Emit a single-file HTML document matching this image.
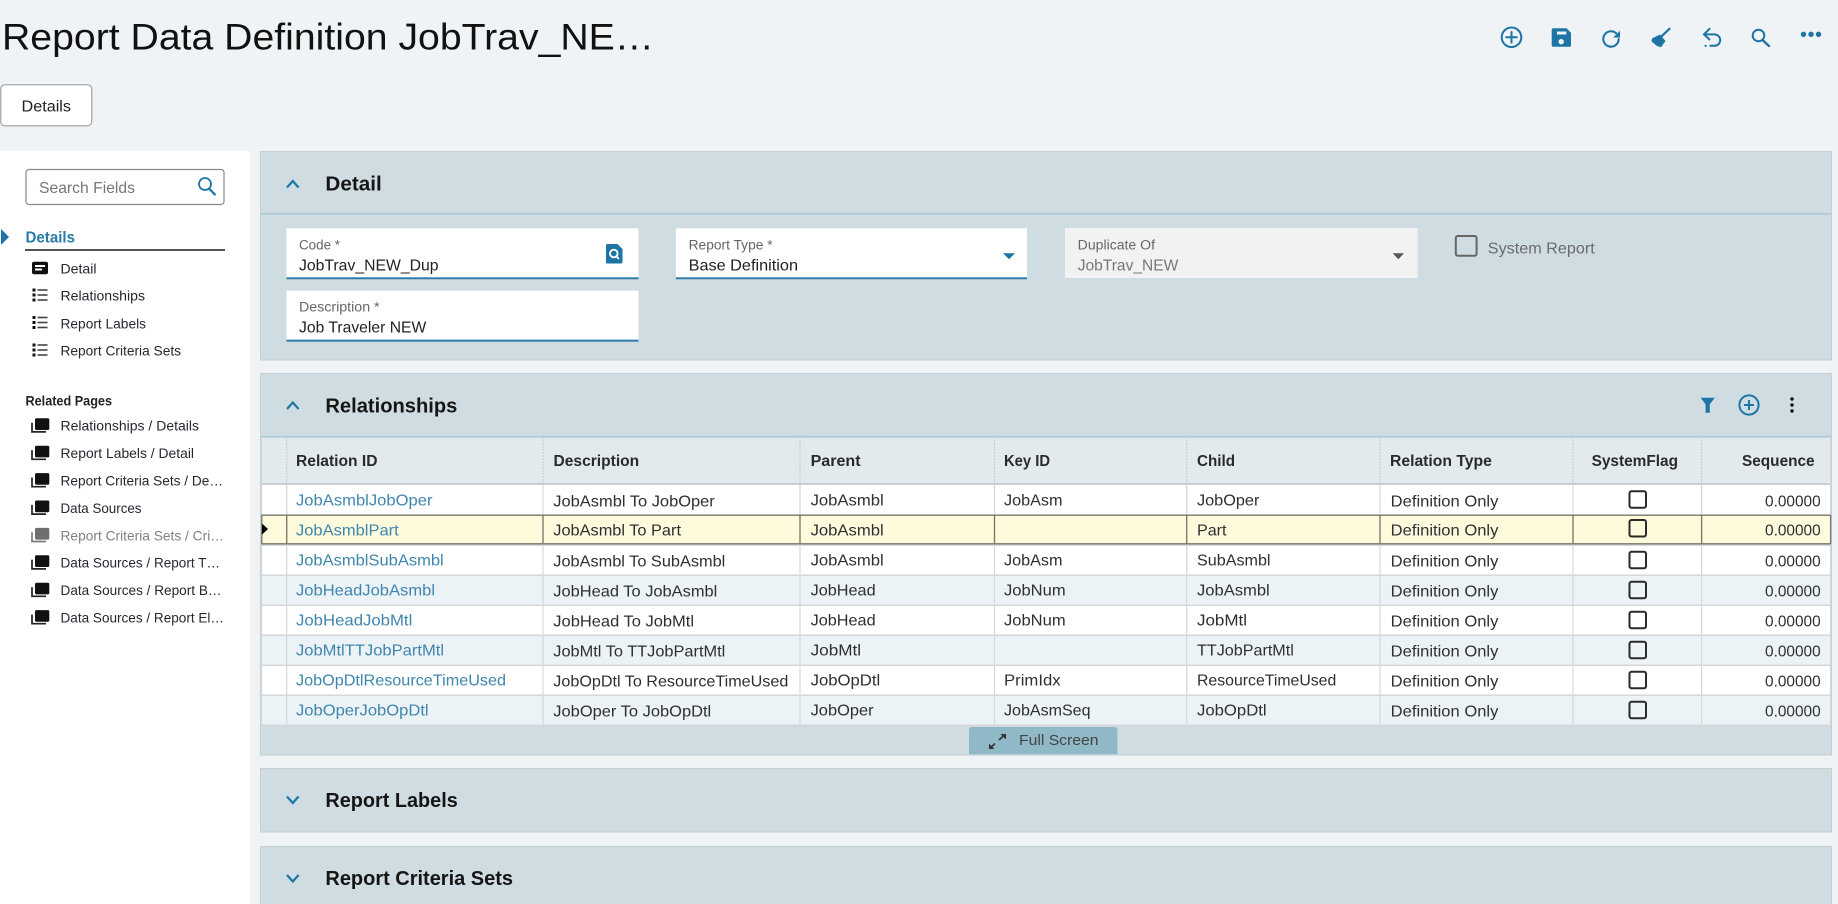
<!DOCTYPE html>
<html lang="en"><head><meta charset="utf-8"><title>Report Data Definition</title>
<style>
html,body{margin:0;padding:0;background:#eff3f6;width:1838px;height:904px;overflow:hidden}
svg{display:block;font-family:"Liberation Sans",sans-serif;filter:blur(.3px)}
.n{font-size:14px;fill:#2a2530}
.h{font-size:16px;font-weight:700;fill:#2a2a2a}
.c{font-size:16px;fill:#2f2f33}
.l{font-size:16px;fill:#3f86ad}
.p{font-size:20.5px;font-weight:700;fill:#151515}
.lab{font-size:13.4px;fill:#666}
.v{font-size:16px;fill:#222}
</style></head><body>
<svg width="1838" height="904" viewBox="0 0 1838 904" xmlns="http://www.w3.org/2000/svg">
<defs>
<symbol id="st" overflow="visible" viewBox="0 0 1 1" width="1" height="1">
<rect x="35" y="-12.4" width="14.3" height="11.7" rx="1.5" fill="#111"/>
<path d="M32 -8V1.2H46" fill="none" stroke="#222" stroke-width="1.7"/>
</symbol>
<symbol id="ls" overflow="visible" viewBox="0 0 1 1" width="1" height="1">
<g fill="#111"><rect x="32.5" y="-11.5" width="3" height="3"/><rect x="32.5" y="-6.5" width="3" height="3"/><rect x="32.5" y="-1.5" width="3" height="3"/></g>
<g fill="#444"><rect x="37.5" y="-10.8" width="10" height="1.6"/><rect x="37.5" y="-5.8" width="10" height="1.6"/><rect x="37.5" y="-0.8" width="10" height="1.6"/></g>
</symbol>
<symbol id="cb" overflow="visible" viewBox="0 0 1 1" width="1" height="1">
<rect x="1629.5" y="6.7" width="16.5" height="16.5" rx="2" fill="none" stroke="#2a2a2a" stroke-width="2"/>
</symbol>
</defs>

<rect width="1838" height="904" fill="#eff3f6"/>

<!-- page title -->
<text x="2" y="49.5" font-size="37" fill="#111" textLength="652" lengthAdjust="spacingAndGlyphs">Report Data Definition JobTrav_NE…</text>

<!-- toolbar -->
<g fill="none" stroke="#1d75a5" stroke-width="2" stroke-linecap="round">
<circle cx="1511.5" cy="37.3" r="9.8"/><path d="M1511.5 32v10.6M1506.2 37.3h10.6"/>
<path d="M1618.7 39a7.7 7.7 0 1 1-2.6-5.8" stroke-width="2.1"/>
<path d="M1709.5 28.8L1704 34.3l5.5 5.2M1705 34.400h9.500a5.700 5.700 0 0 1 0 11.400h-4.200"/>
<circle cx="1758.500" cy="35.500" r="5.800"/><path d="M1763 40.500l6 5.500" stroke-width="2.400"/>
<path d="M1669.500 28.800l-8 7.500" stroke-width="2.200"/>
</g>
<g fill="#1d75a5">
<path d="M1553.200 28.300h13.300l4.500 4.500v12.400a1.500 1.500 0 0 1-1.500 1.500h-16.300a1.500 1.500 0 0 1-1.500-1.500v-15.400a1.500 1.500 0 0 1 1.500-1.500z"/>
<path d="M1620 30.700v6.800h-6.800z"/>
<circle cx="1705.600" cy="45.900" r="1.100"/>
<path d="M1652 38.500l8-4 5.500 6.500-4.500 6.300-4-1.300-5.500-4.500z"/>
<circle cx="1803.500" cy="34.300" r="2.700"/><circle cx="1811" cy="34.300" r="2.700"/><circle cx="1818.500" cy="34.300" r="2.700"/>
</g>
<rect x="1557" y="31.500" width="9.300" height="3" fill="#eff3f6"/>
<circle cx="1561.200" cy="41.700" r="2.700" fill="#eff3f6"/>

<!-- tab -->
<rect x="0.750" y="84.750" width="91" height="41" rx="4" fill="#fff" stroke="#a8a8a8" stroke-width="1.300"/>
<text x="21.500" y="111.500" font-size="15.500" fill="#222" textLength="49.500" lengthAdjust="spacingAndGlyphs">Details</text>

<!-- left nav -->
<rect x="0" y="151" width="250" height="753" fill="#fff"/>
<rect x="26" y="169.500" width="198" height="35" rx="3" fill="#fff" stroke="#888" stroke-width="1.200"/>
<text x="39" y="193" font-size="16" fill="#777" textLength="96" lengthAdjust="spacingAndGlyphs">Search Fields</text>
<g fill="none" stroke="#1d75a5" stroke-width="1.800"><circle cx="205" cy="184" r="6"/><path d="M209.300 188.800l6.200 6.300" stroke-width="2.200"/></g>

<path d="M1 229l8 8-8 8z" fill="#1d75a5"/>
<text x="25.500" y="242.300" font-size="16" font-weight="700" fill="#2a7ba6" textLength="49.500" lengthAdjust="spacingAndGlyphs">Details</text>
<rect x="25" y="249" width="200" height="2" fill="#555"/>

<rect x="32" y="261.700" width="16" height="12.600" rx="2" fill="#111"/>
<rect x="35" y="265" width="10" height="2" fill="#fff"/><rect x="35" y="268.500" width="7" height="2" fill="#fff"/>
<text class="n" x="60.500" y="273.300" textLength="36" lengthAdjust="spacingAndGlyphs">Detail</text>
<use href="#ls" y="300"/><text class="n" x="60.500" y="300.700" textLength="84.500" lengthAdjust="spacingAndGlyphs">Relationships</text>
<use href="#ls" y="327.500"/><text class="n" x="60.500" y="328.300" textLength="85.500" lengthAdjust="spacingAndGlyphs">Report Labels</text>
<use href="#ls" y="355"/><text class="n" x="60.500" y="355.700" textLength="120.500" lengthAdjust="spacingAndGlyphs">Report Criteria Sets</text>

<text x="25.500" y="405.700" font-size="14" font-weight="700" fill="#222" textLength="86.500" lengthAdjust="spacingAndGlyphs">Related Pages</text>

<use href="#st" y="430.700"/><text class="n" x="60.500" y="430.700" textLength="138.500" lengthAdjust="spacingAndGlyphs">Relationships / Details</text>
<use href="#st" y="458.100"/><text class="n" x="60.500" y="458.100" textLength="133.500" lengthAdjust="spacingAndGlyphs">Report Labels / Detail</text>
<use href="#st" y="485.500"/><text class="n" x="60.500" y="485.500" textLength="162.500" lengthAdjust="spacingAndGlyphs">Report Criteria Sets / De…</text>
<use href="#st" y="512.900"/><text class="n" x="60.500" y="512.900" textLength="81" lengthAdjust="spacingAndGlyphs">Data Sources</text>
<g opacity=".6"><use href="#st" y="540.300"/></g><text x="60.500" y="540.300" font-size="14" fill="#808080" textLength="163.500" lengthAdjust="spacingAndGlyphs">Report Criteria Sets / Cri…</text>
<use href="#st" y="567.700"/><text class="n" x="60.500" y="567.700" textLength="159.500" lengthAdjust="spacingAndGlyphs">Data Sources / Report T…</text>
<use href="#st" y="595.100"/><text class="n" x="60.500" y="595.100" textLength="161" lengthAdjust="spacingAndGlyphs">Data Sources / Report B…</text>
<use href="#st" y="622.500"/><text class="n" x="60.500" y="622.500" textLength="163.500" lengthAdjust="spacingAndGlyphs">Data Sources / Report El…</text>

<!-- Detail panel -->
<rect x="260.500" y="151.500" width="1571" height="208.500" fill="#cfdce1" stroke="#c6ced2"/>
<rect x="261" y="213" width="1570" height="1.500" fill="#a9c8d3"/>
<path d="M287 187.500l5.800-6.500 5.800 6.500" fill="none" stroke="#1d75a5" stroke-width="2.200"/>
<text class="p" x="325.400" y="190.700" textLength="56.300" lengthAdjust="spacingAndGlyphs">Detail</text>

<rect x="286.500" y="228.300" width="352" height="51" fill="#fff"/><rect x="286.500" y="277.300" width="352" height="2" fill="#2a7ba6"/>
<text class="lab" x="299" y="249.300" textLength="41" lengthAdjust="spacingAndGlyphs">Code *</text>
<text class="v" x="299" y="270.700" textLength="139.500" lengthAdjust="spacingAndGlyphs">JobTrav_NEW_Dup</text>
<path d="M606 245.500a1.500 1.500 0 0 1 1.500-1.500h10l5 5v13a1.500 1.500 0 0 1-1.500 1.500h-13.500a1.500 1.500 0 0 1-1.500-1.500z" fill="#1d75a5"/>
<circle cx="613.800" cy="253.500" r="3.800" fill="none" stroke="#fff" stroke-width="1.800"/><path d="M616.500 256.500l2.500 2.500" stroke="#fff" stroke-width="1.800"/>

<rect x="675.800" y="228.300" width="351.200" height="51" fill="#fff"/><rect x="675.800" y="277.300" width="351.200" height="2" fill="#2a7ba6"/>
<text class="lab" x="688.600" y="249.300" textLength="84" lengthAdjust="spacingAndGlyphs">Report Type *</text>
<text class="v" x="688.600" y="270.700" textLength="109.400" lengthAdjust="spacingAndGlyphs">Base Definition</text>
<path d="M1003 253.300h12l-6 6z" fill="#1d75a5"/>

<rect x="1065" y="228" width="352.600" height="50" fill="#f2f2f2"/>
<text class="lab" x="1077.700" y="249.300" textLength="77.300" lengthAdjust="spacingAndGlyphs">Duplicate Of</text>
<text x="1077.700" y="270.700" font-size="16" fill="#777" textLength="100.700" lengthAdjust="spacingAndGlyphs">JobTrav_NEW</text>
<path d="M1392.700 253.300h11.300l-5.650 6z" fill="#555"/>
<rect x="1455.800" y="236" width="20.800" height="19.700" rx="2" fill="none" stroke="#666" stroke-width="2"/>
<text x="1487.800" y="253.300" font-size="16" fill="#6b6b6b" textLength="106.900" lengthAdjust="spacingAndGlyphs">System Report</text>

<rect x="286.500" y="290.700" width="352" height="51" fill="#fff"/><rect x="286.500" y="339.700" width="352" height="2" fill="#2a7ba6"/>
<text class="lab" x="299" y="311.700" textLength="80.600" lengthAdjust="spacingAndGlyphs">Description *</text>
<text class="v" x="299" y="332.700" textLength="127.300" lengthAdjust="spacingAndGlyphs">Job Traveler NEW</text>

<!-- Relationships panel -->
<rect x="260.500" y="373.500" width="1571" height="381.500" fill="#cfdce1" stroke="#c6ced2"/>
<rect x="261" y="436" width="1570" height="1.500" fill="#a9c8d3"/>
<path d="M287 409l5.800-6.500 5.800 6.500" fill="none" stroke="#1d75a5" stroke-width="2.200"/>
<text class="p" x="325.400" y="412.700" textLength="132" lengthAdjust="spacingAndGlyphs">Relationships</text>
<path d="M1700.600 397.700h14.200l-5 6.500v8.500h-4.200v-8.500z" fill="#1d75a5"/>
<g fill="none" stroke="#1d75a5" stroke-width="2"><circle cx="1749" cy="405" r="9.600"/><path d="M1749 400v10M1744 405h10"/></g>
<g fill="#111"><circle cx="1792" cy="399" r="1.700"/><circle cx="1792" cy="405" r="1.700"/><circle cx="1792" cy="411" r="1.700"/></g>

<!-- table -->
<rect x="261.500" y="437.500" width="1568.500" height="46" fill="#e3eaed"/>
<rect x="261.500" y="483" width="1568.500" height="2.500" fill="#c8cfd2"/>
<rect x="261.500" y="485" width="1568.500" height="30" fill="#fff"/>
<rect x="261.500" y="515" width="1568.500" height="29" fill="#fefadc"/>
<rect x="261.500" y="544" width="1568.500" height="31" fill="#fff"/>
<rect x="261.500" y="575" width="1568.500" height="30" fill="#ecf3f6"/>
<rect x="261.500" y="605" width="1568.500" height="30" fill="#fff"/>
<rect x="261.500" y="635" width="1568.500" height="30" fill="#ecf3f6"/>
<rect x="261.500" y="665" width="1568.500" height="30" fill="#fff"/>
<rect x="261.500" y="695" width="1568.500" height="30" fill="#ecf3f6"/>
<g fill="#d5d8da">
<rect x="261.500" y="544.500" width="1568.500" height="1.500"/>
<rect x="261.500" y="574.500" width="1568.500" height="1.500"/>
<rect x="261.500" y="604.500" width="1568.500" height="1.500"/>
<rect x="261.500" y="634.500" width="1568.500" height="1.500"/>
<rect x="261.500" y="664.500" width="1568.500" height="1.500"/>
<rect x="261.500" y="694.500" width="1568.500" height="1.500"/>
<rect x="261.500" y="724.500" width="1568.500" height="2"/>
</g>
<g stroke="#d5d8da" stroke-width="1.200">
<path d="M286.700 485V725M543 485V725M800 485V725M994.500 485V725M1186.700 485V725M1380 485V725M1573 485V725M1701.600 485V725M1830.600 437V726M261.500 437V726"/>
</g>
<g stroke="#c8cfd2" stroke-width="1.200" stroke-dasharray="2 1">
<path d="M286.700 437V483M543 437V483M800 437V483M994.500 437V483M1186.700 437V483M1380 437V483M1573 437V483M1701.600 437V483"/>
</g>
<g stroke="#77776c" stroke-width="1.300">
<path d="M261.500 515.200H1830.600M261.500 543.800H1830.600M286.700 515V544M543 515V544M800 515V544M994.500 515V544M1186.700 515V544M1380 515V544M1573 515V544M1701.600 515V544M261.800 515V544M1830.600 515V544"/>
</g>
<path d="M262 523.500l6 5.500-6 5.500z" fill="#000"/>

<text class="h" x="296" y="466" textLength="81.500" lengthAdjust="spacingAndGlyphs">Relation ID</text>
<text class="h" x="553.500" y="466" textLength="85.700" lengthAdjust="spacingAndGlyphs">Description</text>
<text class="h" x="810.600" y="466" textLength="50" lengthAdjust="spacingAndGlyphs">Parent</text>
<text class="h" x="1004" y="466" textLength="46" lengthAdjust="spacingAndGlyphs">Key ID</text>
<text class="h" x="1197" y="466" textLength="38" lengthAdjust="spacingAndGlyphs">Child</text>
<text class="h" x="1390" y="466" textLength="101.800" lengthAdjust="spacingAndGlyphs">Relation Type</text>
<text class="h" x="1591.600" y="466" textLength="86.400" lengthAdjust="spacingAndGlyphs">SystemFlag</text>
<text class="h" x="1742" y="466" textLength="72.600" lengthAdjust="spacingAndGlyphs">Sequence</text>

<text class="l" x="296" y="505.700" textLength="136.500" lengthAdjust="spacingAndGlyphs">JobAsmblJobOper</text><text class="c" x="553.300" y="506.700" textLength="161.500" lengthAdjust="spacingAndGlyphs">JobAsmbl To JobOper</text><text class="c" x="810.600" y="505.700" textLength="73.100" lengthAdjust="spacingAndGlyphs">JobAsmbl</text><text class="c" x="1004" y="505.700" textLength="58.500" lengthAdjust="spacingAndGlyphs">JobAsm</text><text class="c" x="1197" y="505.700" textLength="62.400" lengthAdjust="spacingAndGlyphs">JobOper</text><text class="c" x="1390.700" y="506.700" textLength="107.700" lengthAdjust="spacingAndGlyphs">Definition Only</text><use href="#cb" y="484.500"/><text class="c" x="1765" y="506.700" textLength="55.700" lengthAdjust="spacingAndGlyphs">0.00000</text>

<text class="l" x="296" y="535.700" textLength="102.700" lengthAdjust="spacingAndGlyphs">JobAsmblPart</text><text class="c" x="553.300" y="535.700" textLength="127.700" lengthAdjust="spacingAndGlyphs">JobAsmbl To Part</text><text class="c" x="810.600" y="535.700" textLength="73.100" lengthAdjust="spacingAndGlyphs">JobAsmbl</text><text class="c" x="1197" y="535.700" textLength="29.500" lengthAdjust="spacingAndGlyphs">Part</text><text class="c" x="1390.700" y="535.700" textLength="107.700" lengthAdjust="spacingAndGlyphs">Definition Only</text><use href="#cb" y="513.300"/><text class="c" x="1765" y="535.700" textLength="55.700" lengthAdjust="spacingAndGlyphs">0.00000</text>

<text class="l" x="296" y="565.700" textLength="147.700" lengthAdjust="spacingAndGlyphs">JobAsmblSubAsmbl</text><text class="c" x="553.300" y="566.700" textLength="172" lengthAdjust="spacingAndGlyphs">JobAsmbl To SubAsmbl</text><text class="c" x="810.600" y="565.700" textLength="73.100" lengthAdjust="spacingAndGlyphs">JobAsmbl</text><text class="c" x="1004" y="565.700" textLength="58.500" lengthAdjust="spacingAndGlyphs">JobAsm</text><text class="c" x="1197" y="565.700" textLength="73.500" lengthAdjust="spacingAndGlyphs">SubAsmbl</text><text class="c" x="1390.700" y="566.700" textLength="107.700" lengthAdjust="spacingAndGlyphs">Definition Only</text><use href="#cb" y="545"/><text class="c" x="1765" y="566.700" textLength="55.700" lengthAdjust="spacingAndGlyphs">0.00000</text>

<text class="l" x="296" y="595.700" textLength="139" lengthAdjust="spacingAndGlyphs">JobHeadJobAsmbl</text><text class="c" x="553.300" y="596.700" textLength="164" lengthAdjust="spacingAndGlyphs">JobHead To JobAsmbl</text><text class="c" x="810.600" y="595.700" textLength="65" lengthAdjust="spacingAndGlyphs">JobHead</text><text class="c" x="1004" y="595.700" textLength="61.600" lengthAdjust="spacingAndGlyphs">JobNum</text><text class="c" x="1197" y="595.700" textLength="72.700" lengthAdjust="spacingAndGlyphs">JobAsmbl</text><text class="c" x="1390.700" y="596.700" textLength="107.700" lengthAdjust="spacingAndGlyphs">Definition Only</text><use href="#cb" y="575"/><text class="c" x="1765" y="596.700" textLength="55.700" lengthAdjust="spacingAndGlyphs">0.00000</text>

<text class="l" x="296" y="625.700" textLength="116.300" lengthAdjust="spacingAndGlyphs">JobHeadJobMtl</text><text class="c" x="553.300" y="626.700" textLength="140.700" lengthAdjust="spacingAndGlyphs">JobHead To JobMtl</text><text class="c" x="810.600" y="625.700" textLength="65" lengthAdjust="spacingAndGlyphs">JobHead</text><text class="c" x="1004" y="625.700" textLength="61.600" lengthAdjust="spacingAndGlyphs">JobNum</text><text class="c" x="1197" y="625.700" textLength="50" lengthAdjust="spacingAndGlyphs">JobMtl</text><text class="c" x="1390.700" y="626.700" textLength="107.700" lengthAdjust="spacingAndGlyphs">Definition Only</text><use href="#cb" y="605"/><text class="c" x="1765" y="626.700" textLength="55.700" lengthAdjust="spacingAndGlyphs">0.00000</text>

<text class="l" x="296" y="655.700" textLength="148" lengthAdjust="spacingAndGlyphs">JobMtlTTJobPartMtl</text><text class="c" x="553.300" y="656.700" textLength="172" lengthAdjust="spacingAndGlyphs">JobMtl To TTJobPartMtl</text><text class="c" x="810.600" y="655.700" textLength="50.500" lengthAdjust="spacingAndGlyphs">JobMtl</text><text class="c" x="1197" y="655.700" textLength="96.800" lengthAdjust="spacingAndGlyphs">TTJobPartMtl</text><text class="c" x="1390.700" y="656.700" textLength="107.700" lengthAdjust="spacingAndGlyphs">Definition Only</text><use href="#cb" y="635"/><text class="c" x="1765" y="656.700" textLength="55.700" lengthAdjust="spacingAndGlyphs">0.00000</text>

<text class="l" x="296" y="685.700" textLength="210" lengthAdjust="spacingAndGlyphs">JobOpDtlResourceTimeUsed</text><text class="c" x="553.300" y="686.700" textLength="235" lengthAdjust="spacingAndGlyphs">JobOpDtl To ResourceTimeUsed</text><text class="c" x="810.600" y="685.700" textLength="69.600" lengthAdjust="spacingAndGlyphs">JobOpDtl</text><text class="c" x="1004" y="685.700" textLength="56.600" lengthAdjust="spacingAndGlyphs">PrimIdx</text><text class="c" x="1197" y="685.700" textLength="139.300" lengthAdjust="spacingAndGlyphs">ResourceTimeUsed</text><text class="c" x="1390.700" y="686.700" textLength="107.700" lengthAdjust="spacingAndGlyphs">Definition Only</text><use href="#cb" y="665"/><text class="c" x="1765" y="686.700" textLength="55.700" lengthAdjust="spacingAndGlyphs">0.00000</text>

<text class="l" x="296" y="715.700" textLength="132.600" lengthAdjust="spacingAndGlyphs">JobOperJobOpDtl</text><text class="c" x="553.300" y="716.700" textLength="157.900" lengthAdjust="spacingAndGlyphs">JobOper To JobOpDtl</text><text class="c" x="810.600" y="715.700" textLength="63" lengthAdjust="spacingAndGlyphs">JobOper</text><text class="c" x="1004" y="715.700" textLength="86.500" lengthAdjust="spacingAndGlyphs">JobAsmSeq</text><text class="c" x="1197" y="715.700" textLength="69.600" lengthAdjust="spacingAndGlyphs">JobOpDtl</text><text class="c" x="1390.700" y="716.700" textLength="107.700" lengthAdjust="spacingAndGlyphs">Definition Only</text><use href="#cb" y="695"/><text class="c" x="1765" y="716.700" textLength="55.700" lengthAdjust="spacingAndGlyphs">0.00000</text>

<!-- full screen tab -->
<path d="M969 754.300V730a3 3 0 0 1 3-3h142.400a3 3 0 0 1 3 3v24.300z" fill="#8fb9c6"/>
<g fill="none" stroke="#333" stroke-width="1.600"><path d="M990 748.500l5-5M999 740l6-5.500"/></g>
<path d="M1000.500 734h5.500v5.500zM989 743.500v5.500h5.500z" fill="#333"/>
<text x="1019" y="745" font-size="15" fill="#444" textLength="79.500" lengthAdjust="spacingAndGlyphs">Full Screen</text>

<!-- Report Labels -->
<rect x="260.500" y="768.500" width="1571" height="63.500" fill="#cfdce1" stroke="#c6ced2"/>
<path d="M287 796.500l5.800 6.500 5.800-6.500" fill="none" stroke="#1d75a5" stroke-width="2.200"/>
<text class="p" x="325.400" y="807.200" textLength="132.400" lengthAdjust="spacingAndGlyphs">Report Labels</text>

<!-- Report Criteria Sets -->
<rect x="260.500" y="846.500" width="1571" height="60" fill="#cfdce1" stroke="#c6ced2"/>
<path d="M287 875l5.800 6.500 5.800-6.500" fill="none" stroke="#1d75a5" stroke-width="2.200"/>
<text class="p" x="325.400" y="885" textLength="187.600" lengthAdjust="spacingAndGlyphs">Report Criteria Sets</text>
</svg>
</body></html>
